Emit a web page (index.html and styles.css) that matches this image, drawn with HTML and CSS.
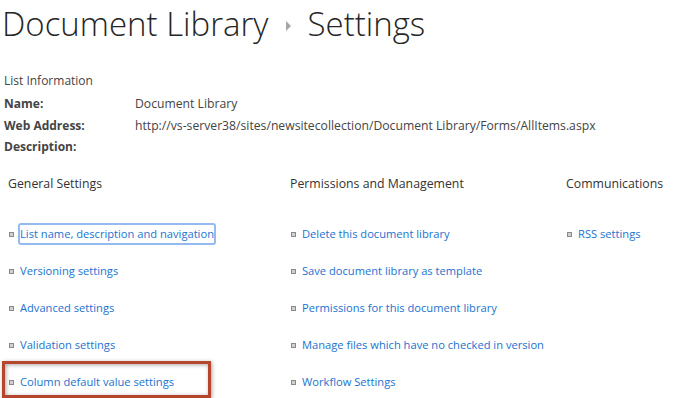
FILE: index.html
```html
<!DOCTYPE html>
<html lang="en">
<head>
    <meta charset="UTF-8">
    <title>Document Library - Settings</title>
    <link rel="stylesheet" href="styles.css">
</head>
<body>
    <h1 class="title">
        <span>Document Library</span>
        <span class="crumb"></span>
        <span>Settings</span>
    </h1>

    <div class="info">
        <h2>List Information</h2>
        <dl>
            <dt>Name:</dt>
            <dd>Document Library</dd>
            <dt>Web Address:</dt>
            <dd>http://vs-server38/sites/newsitecollection/Document Library/Forms/AllItems.aspx</dd>
            <dt>Description:</dt>
            <dd></dd>
        </dl>
    </div>

    <div class="groups">
        <div class="group first">
            <h3>General Settings</h3>
            <ul>
                <li><a href="#" class="focused">List name, description and navigation</a></li>
                <li><a href="#">Versioning settings</a></li>
                <li><a href="#">Advanced settings</a></li>
                <li><a href="#">Validation settings</a></li>
                <li class="marked"><a href="#">Column default value settings</a></li>
            </ul>
        </div>
        <div class="group second">
            <h3>Permissions and Management</h3>
            <ul>
                <li><a href="#">Delete this document library</a></li>
                <li><a href="#">Save document library as template</a></li>
                <li><a href="#">Permissions for this document library</a></li>
                <li><a href="#">Manage files which have no checked in version</a></li>
                <li><a href="#">Workflow Settings</a></li>
            </ul>
        </div>
        <div class="group">
            <h3>Communications</h3>
            <ul>
                <li><a href="#">RSS settings</a></li>
            </ul>
        </div>
    </div>
</body>
</html>
```

FILE: styles.css
```css
body,h1,h2,h3,dl,dd,ul,li{
    margin: 0;
    padding: 0;
    list-style: none;
}
body{
    font-family: "Open Sans", "Liberation Sans", sans-serif;
    font-size: 12px;
    color: #444;
    background: #fff;
    overflow: hidden;
}
.title{
    font-weight: 300;
    font-size: 33px;
    color: #262626;
    line-height: 48px;
    padding-left: 2px;
    display: flex;
    align-items: center;
    gap: 17px;
}
.crumb{
    width: 0;
    height: 0;
    border-top: 5px solid transparent;
    border-bottom: 5px solid transparent;
    border-left: 5px solid #a6a6a6;
    margin-top: 4px;
}
.info{
    padding: 23px 0 0 4px;
}
.info h2{
    font-weight: normal;
    font-size: 12px;
    line-height: 20px;
    margin-bottom: 2px;
}
.info dl{
    display: grid;
    grid-template-columns: 131px auto;
    line-height: 21.5px;
    font-size: 12.2px;
}
.info dt{
    font-weight: bold;
    font-size: 12px;
}
.groups{
    display: flex;
    padding: 16px 0 0 8px;
}
.group{
    flex: none;
}
.group.first{
    width: 282px;
}
.group.second{
    width: 276px;
}
.group h3{
    font-weight: normal;
    font-size: 12.3px;
    color: #333;
    line-height: 20px;
    margin-bottom: 30px;
}
.group li{
    font-size: 11.15px;
    line-height: 20px;
    height: 37px;
    display: flex;
    align-items: flex-start;
    position: relative;
}
.group li::before{
    content: "";
    width: 3px;
    height: 3px;
    border: 1px solid #8a8a8a;
    background: #d0d0d0;
    margin: 8px 6px 0 1px;
    flex: none;
}
.group a{
    color: #1a73cf;
    text-decoration: none;
    white-space: nowrap;
}
.group a.focused{
    outline: 2px solid #93bbf0;
    outline-offset: -1px;
    border-radius: 2px;
    margin-left: -1px;
    padding: 0 1px;
}
.marked::after{
    content: "";
    position: absolute;
    left: -6px;
    top: -11px;
    width: 203px;
    height: 31px;
    border: 3px solid #b5452c;
    box-shadow: 1px 1px 4px rgba(0,0,0,0.35), inset 1px 1px 4px rgba(0,0,0,0.35);
}
```
